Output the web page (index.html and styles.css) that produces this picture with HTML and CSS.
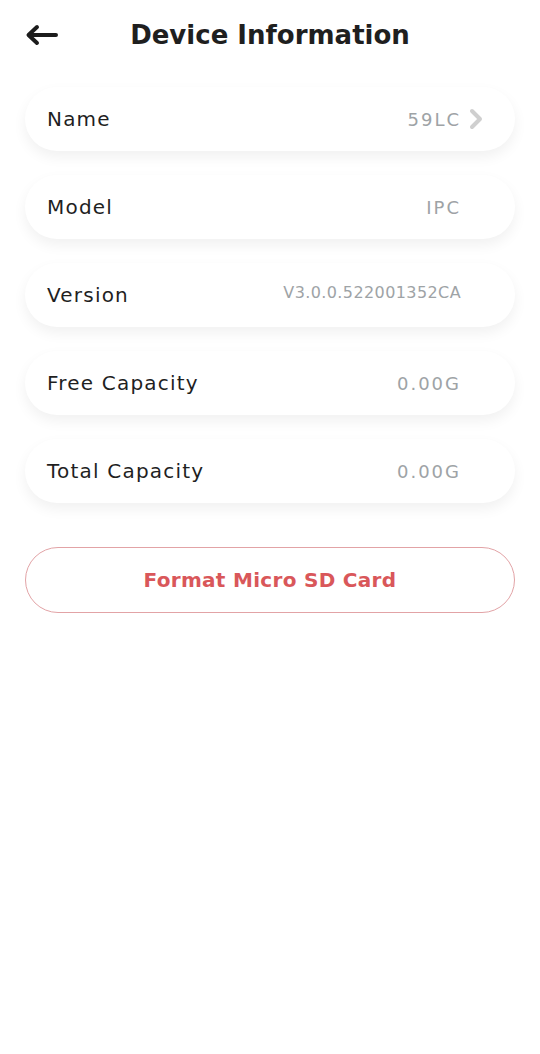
FILE: index.html
```html
<!DOCTYPE html>
<html>
  <head>
    <meta name="viewport" content="width=device-width,initial-scale=1.0">
    <title>Device Information</title>
    <link rel="stylesheet" href="styles.css">
  </head>
  <body>
    <header class="top-bar">
      <button class="back-btn" aria-label="Back">
        <svg width="34" height="22" viewBox="0 0 34 22">
          <path d="M31 11H4M12 3L3.5 11L12 19" fill="none" stroke="#1c1c1c" stroke-width="4" stroke-linecap="round" stroke-linejoin="round"/>
        </svg>
      </button>
      <h1 class="title">Device Information</h1>
    </header>

    <div class="info-list">
      <div class="info-row">
        <span class="info-label">Name</span>
        <span class="info-value">59LC</span>
        <span class="chevron">
          <svg width="16" height="22" viewBox="0 0 16 22">
            <path d="M4 3L12 11L4 19" fill="none" stroke="#cfcfcf" stroke-width="4" stroke-linecap="round" stroke-linejoin="round"/>
          </svg>
        </span>
      </div>
      <div class="info-row">
        <span class="info-label">Model</span>
        <span class="info-value">IPC</span>
        <span class="chevron"></span>
      </div>
      <div class="info-row">
        <span class="info-label">Version</span>
        <span class="info-value small">V3.0.0.522001352CA</span>
        <span class="chevron"></span>
      </div>
      <div class="info-row">
        <span class="info-label">Free Capacity</span>
        <span class="info-value">0.00G</span>
        <span class="chevron"></span>
      </div>
      <div class="info-row">
        <span class="info-label">Total Capacity</span>
        <span class="info-value">0.00G</span>
        <span class="chevron"></span>
      </div>
    </div>

    <button class="format-btn">Format Micro SD Card</button>
  </body>
</html>
```

FILE: styles.css
```css
body {
  margin: 0;
  padding: 0;
  background: #ffffff;
  font-family: 'DejaVu Sans', 'Open Sans', sans-serif;
  color: #1c1c1c;
}

.top-bar {
  display: flex;
  align-items: center;
  height: 70px;
  padding: 0 25px;
}

.back-btn {
  background: none;
  border: none;
  padding: 0;
  display: flex;
  cursor: pointer;
}

.title {
  flex: 1;
  margin: 0 0 0 -34px;
  text-align: center;
  font-size: 26px;
  font-weight: bold;
  color: #1f1f1f;
}

.info-list {
  display: flex;
  flex-direction: column;
  gap: 24px;
  padding: 17px 25px 0;
}

.info-row {
  display: flex;
  align-items: center;
  height: 64px;
  padding: 0 31px 0 22px;
  background: #ffffff;
  border-radius: 32px;
  box-shadow: 0 6px 14px rgba(0, 0, 0, 0.06);
}

.info-label {
  flex: 1;
  font-size: 20px;
  letter-spacing: 1.2px;
  color: #1f1f1f;
}

.info-value {
  font-size: 18px;
  letter-spacing: 2px;
  color: #9ea3a6;
}

.info-value.small {
  font-size: 16px;
  letter-spacing: 0.4px;
  margin-top: -6px;
}

.chevron {
  display: flex;
  width: 16px;
  margin-left: 7px;
}

.format-btn {
  display: block;
  width: 490px;
  height: 66px;
  margin: 44px auto 0;
  background: #ffffff;
  border: 1px solid #e2a3a6;
  border-radius: 33px;
  font-family: 'DejaVu Sans', 'Open Sans', sans-serif;
  font-size: 20px;
  letter-spacing: 0.3px;
  font-weight: bold;
  color: #d9575a;
  cursor: pointer;
}
```
